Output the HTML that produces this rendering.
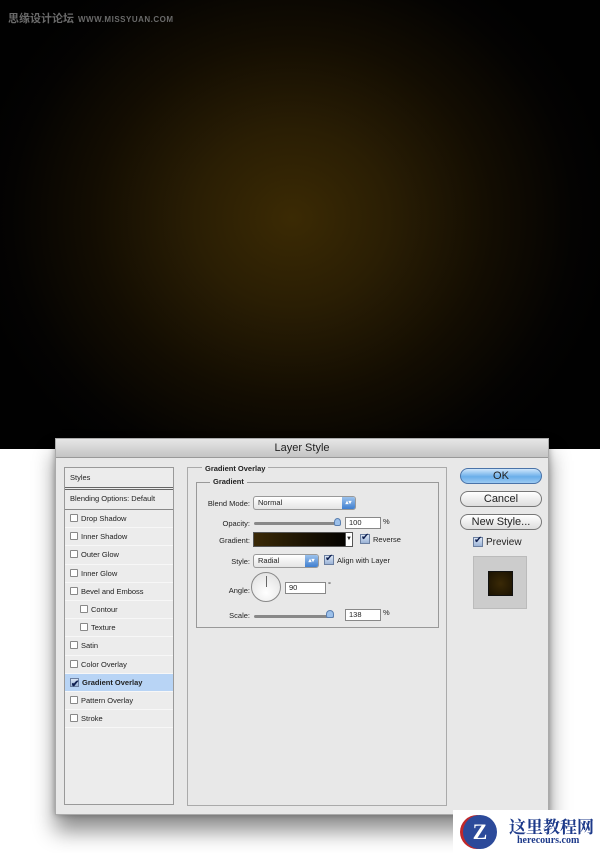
<!DOCTYPE html>
<html><head><meta charset="utf-8"><style>
*{margin:0;padding:0;box-sizing:border-box}
body{width:600px;height:853px;background:#fff;position:relative;overflow:hidden;font-family:"Liberation Sans","Noto Sans CJK SC",sans-serif;font-size:8px;color:#222}
.bg{position:absolute;left:0;top:0;width:600px;height:449px;background:radial-gradient(ellipse 320px 290px at 292px 218px,#3b2a04 0%,#2a1e04 30%,#130d02 62%,#040302 88%,#010101 100%)}
.wm{position:absolute;left:8px;top:10px;color:#6a6a6a;font-size:11px;font-weight:bold;letter-spacing:0}
.wm span{font-size:8px;margin-left:4px;letter-spacing:.5px}
.dlg{position:absolute;left:55px;top:438px;width:494px;height:377px;background:#e8e8e8;border:1px solid #aaa;box-shadow:0 16px 20px rgba(0,0,0,.45),0 0 6px rgba(0,0,0,.3)}
.tb{height:19px;background:linear-gradient(#e6e6e6,#c4c4c4);border-bottom:1px solid #999;text-align:center;font-size:11px;line-height:19px;color:#222}
.lp{position:absolute;left:8px;top:28px;width:110px;height:338px;border:1px solid #999;background:#ececec}
.lp div{height:18.2px;line-height:18px;padding-left:5px;border-bottom:1px solid #f7f7f7;font-size:7.5px}
.cb{display:inline-block;width:8px;height:8px;border:1px solid #888;background:#fff;margin-right:3px;vertical-align:-1px;border-radius:1px}
.rp{position:absolute;left:131px;top:28px;width:260px;height:339px;border:1px solid #aaa}
.ck{display:inline-block;width:10px;height:10px;border:1px solid #6b7fa0;background:linear-gradient(#dbe6f5,#9bb3d6);vertical-align:-2px;position:relative;margin-right:3px}
.ck:after{content:"✔";position:absolute;left:0;top:-3px;font-size:10px;color:#102050}
.lbl{position:absolute;font-size:7.5px;text-align:right}
.btn{position:absolute;left:404px;width:82px;height:16px;border-radius:8px;border:1px solid #777;background:linear-gradient(#fff,#ddd);text-align:center;font-size:11px;line-height:14px}
.fld{position:absolute;background:#fff;border:1px solid #888;height:12px;font-size:7.5px;line-height:10px;padding-left:3px}
.pop{position:absolute;height:14px;border:1px solid #999;border-radius:3px;background:linear-gradient(#fff,#e4e4e4);font-size:7.5px;line-height:12px;padding-left:4px}
.pop b{position:absolute;right:0;top:0;width:13px;height:12px;background:linear-gradient(#9cc2ec,#3f7fd0);border-radius:0 2px 2px 0;color:#fff;font-size:6px;text-align:center;line-height:12px}
.sl{position:absolute;height:3px;background:#888;border-radius:2px}
.logo{position:absolute;left:453px;top:810px;width:147px;height:43px;background:#fff}
</style></head><body>
<div class="bg"></div>
<div class="wm">思缘设计论坛<span>WWW.MISSYUAN.COM</span></div>
<div class="dlg">
<div class="tb">Layer Style</div>
<div class="lp">
<div style="height:22px;line-height:20px;border-bottom:3px double #666">Styles</div>
<div style="height:20px;border-bottom:1px solid #888">Blending Options: Default</div>
<div><span class="cb"></span>Drop Shadow</div>
<div><span class="cb"></span>Inner Shadow</div>
<div><span class="cb"></span>Outer Glow</div>
<div><span class="cb"></span>Inner Glow</div>
<div><span class="cb"></span>Bevel and Emboss</div>
<div style="padding-left:15px"><span class="cb"></span>Contour</div>
<div style="padding-left:15px"><span class="cb"></span>Texture</div>
<div><span class="cb"></span>Satin</div>
<div><span class="cb"></span>Color Overlay</div>
<div style="background:#b8d4f5;font-weight:bold"><span class="ck" style="width:9px;height:9px"></span>Gradient Overlay</div>
<div><span class="cb"></span>Pattern Overlay</div>
<div><span class="cb"></span>Stroke</div>
</div>
<div class="rp">
<div style="position:absolute;left:8px;top:14px;width:243px;height:146px;border:1px solid #999"></div>
<div style="position:absolute;left:14px;top:-4px;background:#e8e8e8;padding:0 3px;font-weight:bold;font-size:7.5px">Gradient Overlay</div>
<div style="position:absolute;left:22px;top:9px;background:#e8e8e8;padding:0 3px;font-weight:bold;font-size:7.5px">Gradient</div>
<div class="lbl" style="left:10px;top:31px;width:52px">Blend Mode:</div>
<div class="pop" style="left:65px;top:28px;width:103px">Normal<b>▴▾</b></div>
<div class="lbl" style="left:10px;top:51px;width:52px">Opacity:</div>
<div class="sl" style="left:66px;top:54px;width:86px"></div>
<div style="position:absolute;left:146px;top:50px;width:7px;height:8px;background:#9cc0ea;border-radius:50% 50% 2px 2px;border:1px solid #5a7fb0"></div>
<div class="fld" style="left:157px;top:49px;width:36px">100</div><div class="lbl" style="left:195px;top:49px">%</div>
<div class="lbl" style="left:10px;top:68px;width:52px">Gradient:</div>
<div style="position:absolute;left:65px;top:64px;width:100px;height:15px;background:linear-gradient(90deg,#3a2906,#000);border:1px solid #555"></div>
<div style="position:absolute;left:157px;top:64px;width:8px;height:15px;background:#fff;border:1px solid #555;font-size:6px;text-align:center;line-height:13px">▼</div>
<div style="position:absolute;left:172px;top:66px;font-size:7.5px"><span class="ck"></span>Reverse</div>
<div class="lbl" style="left:10px;top:89px;width:52px">Style:</div>
<div class="pop" style="left:65px;top:86px;width:66px">Radial<b>▴▾</b></div>
<div style="position:absolute;left:136px;top:87px;font-size:7.5px"><span class="ck"></span>Align with Layer</div>
<div class="lbl" style="left:10px;top:118px;width:52px">Angle:</div>
<div style="position:absolute;left:63px;top:104px;width:30px;height:30px;border-radius:50%;border:1px solid #888;background:radial-gradient(circle at 50% 70%,#fff,#ddd)"><div style="position:absolute;left:14px;top:3px;width:1px;height:11px;background:#666"></div></div>
<div class="fld" style="left:97px;top:114px;width:41px">90</div><div class="lbl" style="left:140px;top:112px">°</div>
<div class="lbl" style="left:10px;top:143px;width:52px">Scale:</div>
<div class="sl" style="left:66px;top:147px;width:80px"></div>
<div style="position:absolute;left:138px;top:142px;width:8px;height:8px;background:#9cc0ea;border-radius:50% 50% 2px 2px;border:1px solid #5a7fb0"></div>
<div class="fld" style="left:157px;top:141px;width:36px">138</div><div class="lbl" style="left:195px;top:140px">%</div>
</div>
<div class="btn" style="top:29px;background:linear-gradient(#cfe6fb,#6aaeea 55%,#9ccaf2);border-color:#4a73a8">OK</div>
<div class="btn" style="top:52px">Cancel</div>
<div class="btn" style="top:75px">New Style...</div>
<div style="position:absolute;left:417px;top:98px;font-size:10px"><span class="ck"></span>Preview</div>
<div style="position:absolute;left:417px;top:117px;width:54px;height:53px;background:#ccc;border:1px solid #bbb"><div style="position:absolute;left:14px;top:14px;width:25px;height:25px;background:radial-gradient(#3a2906,#1a1202);border:1px solid #111"></div></div>
</div>
<div class="logo">
<div style="position:absolute;left:10px;top:5px;width:34px;height:34px;border-radius:50%;background:#2c4a9a;color:#fff;font-weight:bold;font-size:22px;text-align:center;line-height:34px;font-family:'Liberation Serif',serif;box-shadow:-3px 0 0 #c0282a">Z</div>
<div style="position:absolute;left:56px;top:3px;font-size:17px;font-weight:bold;color:#1d3a8a;font-family:'Liberation Serif','Noto Serif CJK SC',serif">这里教程网</div>
<div style="position:absolute;left:64px;top:25px;font-size:10px;font-weight:bold;color:#1d3a8a;font-family:'Liberation Serif',serif">herecours.com</div>
</div>
</body></html>
